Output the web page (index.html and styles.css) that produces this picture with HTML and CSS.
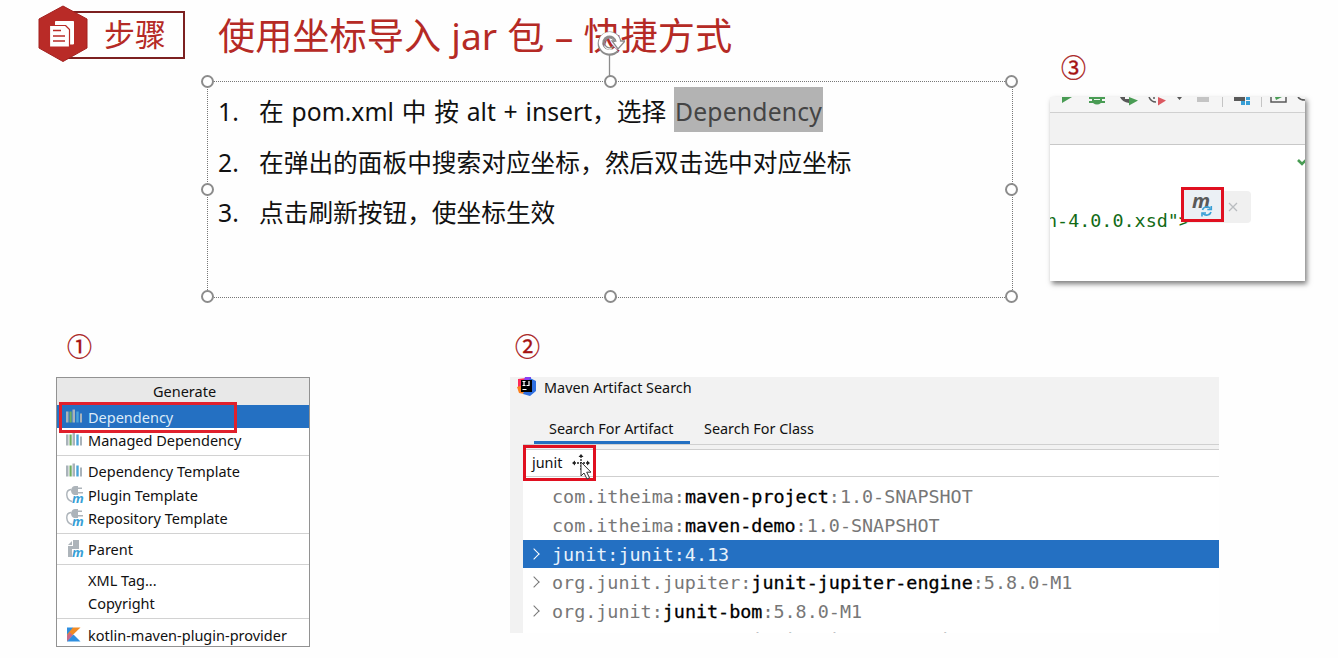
FILE: index.html
```html
<!DOCTYPE html>
<html lang="zh-CN">
<head>
    <meta charset="UTF-8">
    <title>使用坐标导入 jar 包</title>
    <link rel="stylesheet" href="styles.css">
</head>
<body>
    <!-- shared icons -->
    <svg width="0" height="0" class="defs">
        <symbol id="i-lib" viewBox="0 0 18 17">
            <path fill="#a9b3ba" d="M0 3h2.500v11H0zM6.500 1H9v13H6.500zM14 5h2v9h-2z"/>
            <path fill="#6fae62" d="M3.500 3h2.200v11H3.500z"/>
            <path fill="#4aa5d8" d="M10.300 3h2.400v11h-2.400z"/>
        </symbol>
        <symbol id="i-plug" viewBox="0 0 18 18">
            <path fill="#adb4ba" d="M5 4Q6 0 9 0h3v9H8Q5 8 5 4zM12 1.500h4v1.500h-4zM12 6h5v1.500h-5z"/>
            <path fill="none" stroke="#adb4ba" stroke-width="1.400" d="M5 3.500C-1 4-.5 14 6 15.500"/>
        </symbol>
    </svg>

    <div class="slide">
        <div class="intro">
            <div class="heading">
                <div class="step">
                    <svg class="hex" width="50" height="58" viewBox="0 0 50 58">
                        <path fill="#b92b27" stroke="#a3211f" d="M25 1l24 13v29L25 56.500 1 43V14z"/>
                        <path fill="#fff" stroke="#fff" stroke-linejoin="round" d="M17.500 16.500h18V39h-18z"/>
                        <path fill="#fff" stroke="#b92b27" stroke-width="1.200" stroke-linejoin="round" d="M11.500 20.500h16l4 4V42h-20z"/>
                        <path stroke="#b92b27" stroke-width="1.500" d="M15 25.500h8M15 31h12M15 36h12"/>
                    </svg>
                    <div class="step-label">步骤</div>
                </div>
                <h1>使用坐标导入 jar 包 – 快捷方式</h1>
            </div>

            <div class="textbox">
                <ol>
                    <li>在 pom.xml 中 按 alt + insert，选择 <mark>Dependency</mark></li>
                    <li>在弹出的面板中搜索对应坐标，然后双击选中对应坐标</li>
                    <li>点击刷新按钮，使坐标生效</li>
                </ol>
                <i class="handle tl"></i><i class="handle tc"></i><i class="handle tr"></i>
                <i class="handle ml"></i><i class="handle mr"></i>
                <i class="handle bl"></i><i class="handle bc"></i><i class="handle br"></i>
                <svg class="rotate" width="30" height="48" viewBox="0 0 30 48">
                    <path stroke="#8c8c8c" stroke-width="1.300" d="M14.500 26v22"/>
                    <path fill="none" stroke="#8c8c8c" stroke-width="6" d="M21.500 21.500A9 9 0 1 1 23.500 14"/>
                    <path fill="#fff" stroke="#8c8c8c" stroke-width="1.300" d="M17 13h13l-7 8z"/>
                    <path fill="none" stroke="#fff" stroke-width="3.400" d="M21 21A9 9 0 1 1 23.500 14"/>
                    <path fill="none" stroke="#8c8c8c" stroke-width="1.300" d="M18.500 18A5 5 0 1 1 19.500 14"/>
                </svg>
            </div>
        </div>

        <div class="shot3">
            <div class="num">③</div>
            <div class="editor">
                <svg class="toolbar" width="255" height="15" viewBox="0 0 255 15">
                    <path fill="#499c54" d="M12 0h10L12 6zM39 0h16v2h-3v2h3v2h-4q-4 3-8 0h-4V4h3V2h-3zM79 0l9 3.500-9 5z"/>
                    <path fill="#eef3ee" d="M44 2h6v1h-6z"/>
                    <path fill="#595959" d="M70 0h5v2h4v4q-7-1-9-6zM127 0h5l-2.500 3zM184 0h11v4h-11z"/>
                    <path fill="none" stroke="#595959" stroke-width="1.500" d="M99 0q2 5 7 5M104 0v2M221 0v5h15V0M248 0q2 3 7 3"/>
                    <path fill="#db5860" d="M108 0l8 3.500-8 5z"/>
                    <path fill="#c4c4c4" d="M147 0h12v5h-12zM172 0h1v10h-1zM211 0h1v10h-1z"/>
                    <path fill="#389fd6" d="M191 4h4v4h-4zM196 0h4v3h-4zM196 4h4v4h-4z"/>
                    <path fill="#499c54" d="M225 0h7l-6 3z"/>
                </svg>
                <div class="tabstrip"></div>
                <div class="code">
                    <svg class="ok" width="8" height="9" viewBox="0 0 8 9"><path fill="none" stroke="#499c54" stroke-width="2.600" d="M1 3l4 4 4-4"/></svg>
                    <pre>n-4.0.0.xsd"&gt;</pre>
                    <div class="reload">
                        <div class="reload-btn">
                            <svg width="37" height="29" viewBox="0 0 37 29">
                                <text x="8" y="18" class="m-dark">m</text>
                                <g fill="none" stroke="#389fd6" stroke-width="1.600">
                                    <path d="M18.500 20a4.500 4 0 0 1 8-1.500M27 22a4.500 4 0 0 1-8 1.500"/>
                                    <path d="M27.300 16v3.500h-4M18 26.500V23h4"/>
                                </g>
                            </svg>
                        </div>
                        <svg class="close" width="10" height="10" viewBox="0 0 10 10"><path stroke="#b9bcbf" stroke-width="1.300" d="M1 1l8 8M9 1L1 9"/></svg>
                    </div>
                </div>
            </div>
        </div>

        <div class="shot1">
            <div class="num">①</div>
            <div class="menu">
                <div class="menu-title">Generate</div>
                <div class="item active"><svg><use href="#i-lib"/></svg>Dependency</div>
                <div class="item"><svg><use href="#i-lib"/></svg>Managed Dependency</div>
                <hr>
                <div class="item"><svg><use href="#i-lib"/></svg>Dependency Template</div>
                <div class="item"><svg viewBox="0 0 18 18"><use href="#i-plug"/><text x="6" y="17" class="m-badge">m</text></svg>Plugin Template</div>
                <div class="item"><svg viewBox="0 0 18 18"><use href="#i-plug"/><text x="6" y="17" class="m-badge">m</text></svg>Repository Template</div>
                <hr>
                <div class="item"><svg viewBox="0 0 18 18"><path fill="#adb4ba" d="M7 0h6v9H6v8H2V6h5zM2 5l4-4v4z"/><text x="6" y="17" class="m-badge">m</text></svg>Parent</div>
                <hr>
                <div class="item"><svg></svg>XML Tag...</div>
                <div class="item"><svg></svg>Copyright</div>
                <hr>
                <div class="item"><svg viewBox="-1 -1 18 17"><path fill="#2f8fe0" d="M0 0h6v6L0 14z"/><path fill="#f28b24" d="M6 0h7.500L0 13V7z"/><path fill="#c86a8a" d="M0 8l3-3 3 3-6 6z"/><path fill="#2f8fe0" d="M0 14l6.500-7 7 7z"/></svg>kotlin-maven-plugin-provider</div>
                <div class="menu-frame"></div>
            </div>
        </div>

        <div class="shot2">
            <div class="num">②</div>
            <div class="search">
                <div class="search-title">
                    <svg width="20" height="19" viewBox="0 0 20 19">
                        <path fill="#fe2857" d="M1 2l9-1-2 9-7 3z"/>
                        <path fill="#fc801d" d="M0 10l6-2 1 9-5-1z"/>
                        <path fill="#8a3ff2" d="M8 0h6v6H6z"/>
                        <path fill="#2f6fe0" d="M13 1l6 3v10l-6 5-7-2z"/>
                        <path d="M4 3h11v12H4z"/>
                        <path fill="none" stroke="#fff" stroke-width="1.200" d="M5.500 4.500h3M7 4.500v4M5.500 8.500h3M12 4v4.500h-2.500M5.500 12.500h4"/>
                    </svg>
                    Maven Artifact Search
                </div>
                <div class="search-tabs">
                    <div class="tab active">Search For Artifact</div>
                    <div class="tab">Search For Class</div>
                </div>
                <div class="query">
                    <span>junit</span>
                    <div class="query-frame"></div>
                    <svg class="cursor" width="20" height="28" viewBox="0 0 20 28">
                        <path stroke="#222" stroke-width="1.300" stroke-dasharray="2 1" d="M10 3v14M3 10h14"/>
                        <path fill="#222" d="M7.500 4L10 1l2.500 3zM4 7.500L1 10l3 2.500zM16 7.500l3 2.500-3 2.500z"/>
                        <path fill="#fff" stroke="#333" d="M10 9v14l3-3 3 6 2.500-1.200-2.800-5.600H20z"/>
                    </svg>
                </div>
                <div class="results">
                    <div class="row">com.itheima:<b>maven-project</b>:1.0-SNAPSHOT</div>
                    <div class="row">com.itheima:<b>maven-demo</b>:1.0-SNAPSHOT</div>
                    <div class="row has-arrow active">junit:junit:4.13</div>
                    <div class="row has-arrow">org.junit.jupiter:<b>junit-jupiter-engine</b>:5.8.0-M1</div>
                    <div class="row has-arrow">org.junit:<b>junit-bom</b>:5.8.0-M1</div>
                    <div class="row">org.junit.vintage:<b>junit-vintage-engine</b>:5.8.0-M1</div>
                </div>
            </div>
        </div>
    </div>
</body>
</html>
```
FILE: styles.css
```css
* { box-sizing: border-box; }
body { margin: 0; background: #fefefe; font-family: "Noto Sans", "Noto Sans CJK SC", sans-serif; color: #111; overflow: hidden; }
.defs { position: absolute; }
.slide { width: 1338px; height: 658px; display: grid; grid-template-columns: 510px 540px 288px; grid-template-rows: 333px 325px; }

/* Heading */
.intro { grid-column: 1 / 3; }
.heading { display: flex; height: 81px; padding-left: 38px; }
.step { display: flex; width: 147px; padding-top: 5px; }
.hex { position: relative; flex: none; }
.step-label { width: 122px; height: 48px; margin: 6px 0 0 -25px; padding-left: 39px; border: 2px solid #7c2020; color: #b52a25; font-size: 31px; line-height: 43px; white-space: nowrap; }
h1 { margin: 6px 0 0 33px; color: #b52a25; font-size: 37.2px; line-height: 59px; font-weight: 400; word-spacing: 0.5px; white-space: nowrap; }

/* Selected text box */
.textbox { position: relative; width: 806px; height: 217px; margin-left: 207px; border: 1px dotted #777; padding-top: 5px; }
ol { list-style: none; counter-reset: n; margin: 0; padding-left: 10px; font-size: 24.7px; line-height: 49.5px; white-space: nowrap; }
li { display: flex; height: 50.5px; counter-increment: n; white-space: pre; word-spacing: 1.4px; }
li::before { content: counter(n) "."; width: 41px; }
mark { background: #b3b3b3; color: #444; height: 45px; line-height: 49px; padding: 0 1px; letter-spacing: 0.2px; }
.handle { position: absolute; width: 13px; height: 13px; border: 2px solid #8c8c8c; border-radius: 50%; background: #fff; }
.tl, .tc, .tr { top: -7px; }
.ml, .mr { top: 101px; }
.bl, .bc, .br { bottom: -6px; }
.tl, .ml, .bl { left: -7px; }
.tc, .bc { left: 396px; }
.tr, .mr, .br { right: -6px; }
.rotate { position: absolute; left: 387px; top: -54px; }

.num { color: #a51212; font-family: "Noto Sans CJK SC", sans-serif; font-size: 25px; line-height: 25px; -webkit-text-stroke: 0.3px #a51212; }

/* Editor */
.shot3 { padding-top: 54px; }
.shot3 .num { padding-left: 11px; height: 43px; }
.editor { width: 255px; height: 184px; background: #fff; box-shadow: 2px 3px 5px rgba(0,0,0,0.5); overflow: hidden; }
.toolbar { display: block; background: #f5f5f5; }
.tabstrip { height: 33px; background: #f2f2f2; border-top: 1px solid #d0d0d0; border-bottom: 1px solid #c8c8c8; }
.code { position: relative; height: 136px; }
.ok { position: absolute; right: 0; top: 12px; }
pre { margin: 0; padding-top: 62px; margin-left: -4px; color: #126b16; font: 18.4px/28px "DejaVu Sans Mono", monospace; }
.reload { position: absolute; left: 131px; top: 42px; width: 70px; height: 35px; display: flex; align-items: center; }
.reload::before { content: ""; position: absolute; left: 4px; right: 0; top: 4px; height: 32px; background: #f0f0f0; border-radius: 4px; }
.reload-btn { position: relative; width: 43px; height: 35px; border: 3px solid #e01020; background: #ebf0f5; }
.m-dark { font: italic bold 20px "Open Sans", sans-serif; fill: #595959; }
.close { position: relative; margin: 5px 0 0 4px; }

/* Generate menu */
.shot1 { padding-left: 56px; }
.shot1 .num, .shot2 .num { height: 44px; }
.shot1 .num { padding-left: 11px; }
.menu { position: relative; width: 254px; height: 270px; border: 1px solid #929292; background: #fff; font-size: 14.5px; }
.menu-title { height: 27px; line-height: 26px; padding-left: 3px; background: #e8e8e8; text-align: center; }
.item { display: flex; align-items: center; height: 23.4px; padding-left: 9px; white-space: nowrap; }
.item svg { width: 18px; height: 18px; margin-right: 4px; flex: none; }
.item.active { background: #2470c2; color: #dcebf8; }
.menu hr { height: 1px; margin: 3.3px 0 3.4px; border: 0; background: #d2d2d2; }
.menu-frame { position: absolute; left: 2px; top: 24px; width: 178px; height: 31px; border: 3px solid #e0202c; }
.m-badge { font: italic bold 13px "Open Sans", sans-serif; fill: #389fd6; }

/* Artifact search */
.shot2 { grid-column: 2 / 4; }
.shot2 .num { padding-left: 5px; }
.search { width: 709px; height: 256px; padding-left: 13px; background: #f2f2f2; overflow: hidden; font-size: 14.4px; }
.search-title { display: flex; gap: 7px; height: 37px; margin-left: -6px; line-height: 21px; }
.search-tabs { display: flex; height: 31px; padding-left: 11px; border-bottom: 1px solid #d0d0d0; }
.tab { width: 156px; height: 30px; line-height: 30px; padding-left: 15px; white-space: nowrap; }
.tab.active { border-bottom: 3px solid #2470c2; }
.tab + .tab { padding-left: 14px; }
.query { position: relative; height: 28px; margin-top: 4px; padding-left: 8px; line-height: 25px; background: #fff; border: 1px solid #cfcfcf; border-right: 0; }
.query-frame { position: absolute; left: -1px; top: -5px; width: 73px; height: 36px; border: 3px solid #e01020; }
.cursor { position: absolute; left: 47px; top: 3px; }
.results { height: 160px; padding-top: 5px; background: #fff; font: 18.4px/29px "DejaVu Sans Mono", monospace; color: #777; }
.row { position: relative; height: 28.8px; padding-left: 29px; white-space: nowrap; }
.row b { font-weight: normal; color: #000; -webkit-text-stroke: 0.3px #000; }
.row.active { background: #2470c2; color: #e8f2fc; }
.has-arrow::before { content: ""; position: absolute; left: 7px; top: 10px; width: 7px; height: 7px; border: solid #777; border-width: 1.5px 1.5px 0 0; transform: rotate(45deg); }
.row.active::before { border-color: #fff; }
```
